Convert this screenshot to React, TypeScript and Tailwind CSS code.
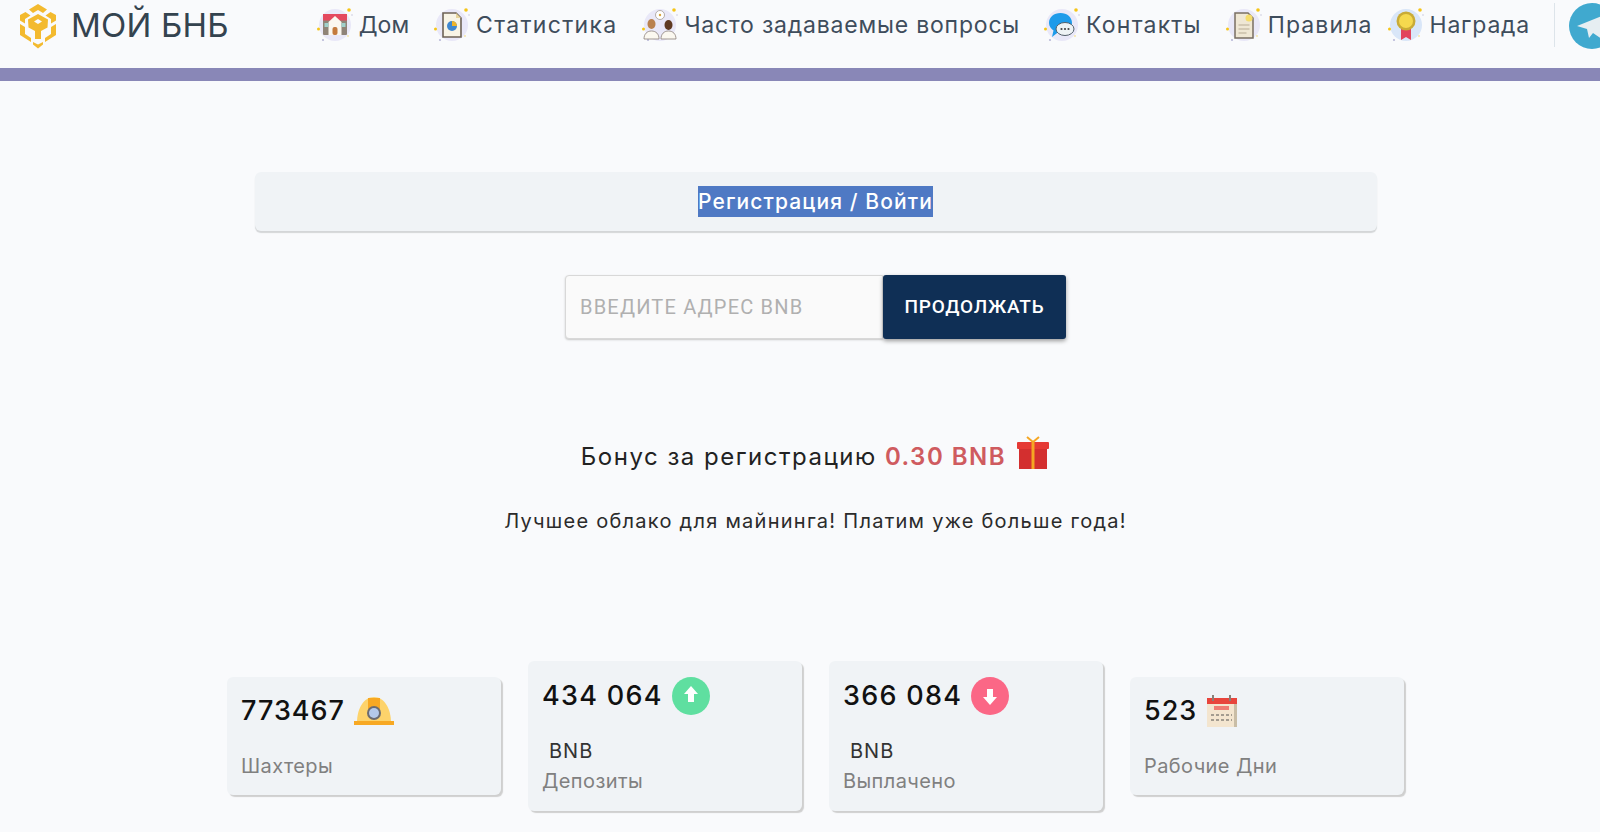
import React from "react";

const Halo = ({ children, bg = "#e9e8f8" }: { children: React.ReactNode; bg?: string }) => (
  <svg width="36" height="36" viewBox="0 0 36 36" className="shrink-0">
    <circle cx="18" cy="18" r="16" fill={bg} />
    <circle cx="32" cy="3" r="1.8" fill="#f5c518" />
    <circle cx="35" cy="8" r="0.8" fill="#c9c9dc" />
    <circle cx="1.5" cy="22" r="1.5" fill="#f5c518" />
    <circle cx="6" cy="33" r="1.1" fill="#b9b9d8" />
    <circle cx="31" cy="29" r="0.9" fill="#f3e2a0" />
    {children}
  </svg>
);

const HomeIcon = () => (
  <Halo>
    <rect x="6" y="10" width="24" height="18" rx="1" fill="#8f8378" />
    <path d="M6 7h24v6.5H6z" fill="#e4495f" />
    <path d="M18 9l6.5 6v13h-13V15z" fill="#fbf7ef" />
    <rect x="15.5" y="20" width="5" height="8" rx="2" fill="#c47a3c" />
    <rect x="7.5" y="16" width="4" height="4" fill="#9fd0cb" />
    <rect x="24.5" y="16" width="4" height="4" fill="#9fd0cb" />
  </Halo>
);
const StatIcon = () => (
  <Halo>
    <path d="M9 6h13l5 5v19H9z" fill="#f8f4e6" stroke="#6d6256" strokeWidth="1.6" />
    <path d="M22 6v5h5z" fill="#e8d49a" />
    <circle cx="18" cy="19" r="5" fill="#3f87d0" />
    <path d="M18 19v-5a5 5 0 0 1 5 5z" fill="#f0b429" />
  </Halo>
);
const FaqIcon = () => (
  <Halo>
    <ellipse cx="9.5" cy="17" rx="4" ry="5" fill="#b9814f" />
    <path d="M2 32c0-5 3-8 7.5-8s7.5 3 7.5 8z" fill="#fbf8f0" stroke="#8a7f78" strokeWidth="0.8" />
    <ellipse cx="26.5" cy="18" rx="4" ry="5" fill="#5f3a22" />
    <path d="M19 32c0-5 3-8 7.5-8s7.5 3 7.5 8z" fill="#fbf8f0" stroke="#8a7f78" strokeWidth="0.8" />
    <circle cx="18" cy="8" r="4.5" fill="#fff" stroke="#9a8f88" strokeWidth="0.7" />
    <circle cx="18" cy="8" r="1.2" fill="#d9a441" />
  </Halo>
);
const ContactIcon = () => (
  <Halo>
    <path d="M5 16c0-6 5-10 11.5-10S28 10 28 16s-5 10-11.5 10c-1 0-2 0-3-.3L8 30l1.5-6.500C7 21.5 5 19 5 16z" fill="#1e9bea" />
    <ellipse cx="21" cy="22" rx="9" ry="6.5" fill="#eef3f5" stroke="#53606b" strokeWidth="1" />
    <circle cx="17.5" cy="22" r="1.1" fill="#444" />
    <circle cx="21" cy="22" r="1.1" fill="#444" />
    <circle cx="24.5" cy="22" r="1.1" fill="#444" />
  </Halo>
);
const RulesIcon = () => (
  <Halo>
    <path d="M9 6h13l5 5v20H9z" fill="#efe7d4" stroke="#7a6f62" strokeWidth="1.5" />
    <path d="M12.5 18h11M12.5 22h11M12.5 26h8" stroke="#b8ab94" strokeWidth="1.2" />
    <circle cx="23" cy="11" r="3.5" fill="#f5dc6a" />
  </Halo>
);
const AwardIcon = () => (
  <Halo bg="#d9e6f8">
    <path d="M13 21h10v12l-5-3-5 3z" fill="#e2445c" />
    <circle cx="18" cy="14" r="9.5" fill="#c9ab36" />
    <circle cx="18" cy="14" r="7" fill="#f5d94e" />
  </Halo>
);

const Logo = () => (
  <svg width="40" height="46" viewBox="0 0 40 46" className="shrink-0">
    <g fill="#f3ba2f">
      <path d="M20 1l9 5.5-4 3.5-5-3-5 3-4-3.5z" />
      <path d="M7.5 9l5 3.5L7 16v4.5L2 17.5V12z" />
      <path d="M32.5 9l-5 3.5L33 16v4.5l5-3V12z" />
      <path d="M20 11l10 5.5-.5 8-6.5 3.500v8h-6v-8L10.5 24.5l-.5-8zM20 16l-4 2.500 4 2.500 4-2.500z" fillRule="evenodd" />
      <path d="M2 21l5 3v7l6 4v4l-11-7z" />
      <path d="M38 21l-5 3v7l-6 4v4l11-7z" />
      <path d="M15 39l5 2.500 5-2.500v2.500l-5 4-5-4z" />
    </g>
  </svg>
);

const Gift = () => (
  <svg width="34" height="36" viewBox="0 0 34 36" className="mb-[6px] shrink-0">
    <path d="M17 6l-6-5M17 6l6-5" stroke="#f5a623" strokeWidth="2" fill="none" />
    <rect x="1" y="6" width="32" height="7" rx="1" fill="#e53935" />
    <rect x="3" y="13" width="28" height="20" fill="#d32f2f" />
    <rect x="15.5" y="6" width="3" height="27" fill="#f5a623" />
  </svg>
);

const Helmet = () => (
  <svg width="40" height="30" viewBox="0 0 40 30">
    <path d="M3 27C3 12 10 1 20 1s17 11 17 26z" fill="#fdd36b" />
    <path d="M14 2h12v11H14z" fill="#f7a823" />
    <path d="M0 25h40v4H0z" fill="#f7a823" />
    <circle cx="20" cy="17" r="7" fill="#6b6b70" />
    <circle cx="20" cy="17" r="5" fill="#b4c9ea" />
  </svg>
);

const Arrow = ({ up }: { up: boolean }) => (
  <svg width="38" height="38" viewBox="0 0 38 38">
    <circle cx="19" cy="19" r="19" fill={up ? "#5fdfa0" : "#fb6786"} />
    {up ? (
      <path d="M19 9l7 8h-4v8h-6v-8h-4z" fill="#fff" />
    ) : (
      <path d="M19 28l-7-8h4v-8h6v8h4z" fill="#fff" />
    )}
  </svg>
);

const Calendar = () => (
  <svg width="32" height="34" viewBox="0 0 32 34">
    <rect x="1" y="4" width="30" height="29" fill="#f3e5cf" />
    <rect x="28" y="4" width="3" height="29" fill="#c9bda6" />
    <rect x="1" y="4" width="30" height="6" fill="#e8453c" />
    <rect x="6" y="1" width="2" height="6" fill="#8a7f78" />
    <rect x="23" y="1" width="2" height="6" fill="#8a7f78" />
    <rect x="8" y="12" width="15" height="4" fill="#ef7d73" />
    <path d="M5 21h21M5 26h21" stroke="#a39c90" strokeWidth="2" strokeDasharray="3 2" />
  </svg>
);

const Telegram = () => (
  <svg width="46" height="46" viewBox="0 0 46 46" className="shrink-0">
    <circle cx="23" cy="23" r="23" fill="#40a9cf" />
    <path d="M8 23l30-12-5 25-9-6-4 5-2-9z" fill="#e6eef2" />
  </svg>
);

const nav: [React.ReactNode, string, string][] = [
  [<HomeIcon />, "Дом", "ml-[88px] tracking-[0px]"],
  [<StatIcon />, "Статистика", "ml-[25px] tracking-[1.3px]"],
  [<FaqIcon />, "Часто задаваемые вопросы", "ml-[25px] tracking-[0.8px]"],
  [<ContactIcon />, "Контакты", "ml-[24px] tracking-[1.2px]"],
  [<RulesIcon />, "Правила", "ml-[24px] tracking-[1.1px]"],
  [<AwardIcon />, "Награда", "ml-[15px] tracking-[0.8px]"],
];

const Card = ({
  value,
  icon,
  unit,
  label,
}: {
  value: string;
  icon: React.ReactNode;
  unit?: string;
  label: string;
}) => (
  <div
    className={
      "w-[274px] rounded-md bg-[#f0f3f6] px-[14px] shadow-[2px_2px_1px_#cfcfcf] " +
      (unit ? "h-[150px] pt-[16px]" : "h-[118px] pt-[15px]")
    }
  >
    <div className="flex h-[38px] items-center gap-[9px]">
      <span className={"text-[27px] font-medium text-[#111] " + (unit ? "tracking-[1.3px]" : "tracking-[1px]")}>{value}</span>
      {icon}
    </div>
    {unit ? (
      <div className="mt-[21px] pl-[7px] text-[20px] leading-[30px] tracking-[1px] text-[#333]">{unit}</div>
    ) : (
      <div className="h-[21px]" />
    )}
    <div className="text-[20px] leading-[30px] tracking-[0.4px] text-[#808080]">{label}</div>
  </div>
);

export default function App() {
  return (
    <div className="h-[832px] w-[1600px] overflow-hidden bg-[#f9fafc] font-['Inter','Noto_Sans',sans-serif]">
      <header className="flex h-[68px] items-start overflow-hidden whitespace-nowrap pl-[18px] pt-[3px]">
        <Logo />
        <span className="ml-[13px] text-[33px] leading-[44px] tracking-[0.2px] text-[#34434f]">МОЙ БНБ</span>
        {nav.map(([icon, text, cls]) => (
          <div key={text} className={"flex h-[44px] items-center gap-[6px] " + cls}>
            {icon}
            <span className="text-[23px] text-[#3f4d5c]">{text}</span>
          </div>
        ))}
        <div className="ml-[24px] h-[44px] w-px shrink-0 bg-[#dde4ea]" />
        <div className="ml-[14px] shrink-0">
          <Telegram />
        </div>
      </header>
      <div className="h-[13px] bg-[#8987b7]" />

      <main className="flex flex-col items-center pl-[31px]">
        <div className="mt-[91px] flex h-[59px] w-[1122px] items-center justify-center rounded-md bg-[#f0f3f6] shadow-[0_2px_1px_#d4d6d8]">
          <span className="bg-[#4f79c4] text-[21px] font-medium leading-[31px] tracking-[1.1px] text-white">Регистрация / Войти</span>
        </div>

        <div className="mt-[44px] flex h-[64px] w-[501px]">
          <div className="flex w-[318px] items-center rounded-l border border-[#d8d8d8] bg-[#fafafa] pl-[14px] font-['Roboto',sans-serif] text-[20px] tracking-[1.2px] text-[#b0b0b0] shadow-[0_1px_2px_#c8c8c8]">
            ВВЕДИТЕ АДРЕС BNB
          </div>
          <div className="flex w-[183px] items-center justify-center rounded-[3px] bg-[#0f2f55] font-['Roboto',sans-serif] text-[19px] font-medium tracking-[0.8px] text-white shadow-[0_2px_4px_#9a9a9a]">
            ПРОДОЛЖАТЬ
          </div>
        </div>

        <div className="mt-[99px] flex h-[38px] items-center gap-[10px]">
          <span className="text-[24px] tracking-[1.5px] text-[#222]">
            Бонус за регистрацию <span className="font-semibold text-[#cf5b5f]">0.30 BNB</span>
          </span>
          <Gift />
        </div>

        <p className="mt-[30px] text-[20px] leading-[30px] tracking-[1.26px] text-[#2b2b2b]">
          Лучшее облако для майнинга! Платим уже больше года!
        </p>

        <div className="mt-[125px] flex items-center gap-[27px]">
          <Card value="773467" icon={<Helmet />} label="Шахтеры" />
          <Card value="434 064" icon={<Arrow up />} unit="BNB" label="Депозиты" />
          <Card value="366 084" icon={<Arrow up={false} />} unit="BNB" label="Выплачено" />
          <Card value="523" icon={<Calendar />} label="Рабочие Дни" />
        </div>
      </main>
    </div>
  );
}
